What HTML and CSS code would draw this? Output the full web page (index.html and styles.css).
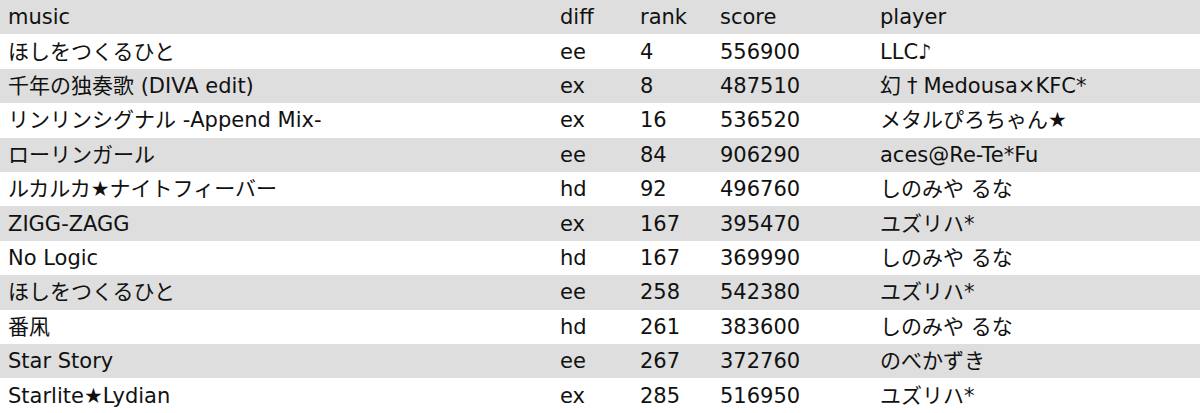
FILE: index.html
```html
<!DOCTYPE html>
<html lang="ja">
<head>
<meta charset="utf-8">
<link rel="stylesheet" href="styles.css">
</head>
<body>
<div class="table">
  <div class="row head"><span>music</span><span>diff</span><span>rank</span><span>score</span><span>player</span></div>
  <div class="row"><span>ほしをつくるひと</span><span>ee</span><span>4</span><span>556900</span><span>LLC♪</span></div>
  <div class="row alt"><span>千年の独奏歌 (DIVA edit)</span><span>ex</span><span>8</span><span>487510</span><span>幻<span class="wide">†</span>Medousa×KFC*</span></div>
  <div class="row"><span>リンリンシグナル -Append Mix-</span><span>ex</span><span>16</span><span>536520</span><span>メタルぴろちゃん★</span></div>
  <div class="row alt"><span>ローリンガール</span><span>ee</span><span>84</span><span>906290</span><span>aces@Re-Te*Fu</span></div>
  <div class="row"><span>ルカルカ★ナイトフィーバー</span><span>hd</span><span>92</span><span>496760</span><span>しのみや るな</span></div>
  <div class="row alt"><span>ZIGG-ZAGG</span><span>ex</span><span>167</span><span>395470</span><span>ユズリハ*</span></div>
  <div class="row"><span>No Logic</span><span>hd</span><span>167</span><span>369990</span><span>しのみや るな</span></div>
  <div class="row alt"><span>ほしをつくるひと</span><span>ee</span><span>258</span><span>542380</span><span>ユズリハ*</span></div>
  <div class="row"><span>番凩</span><span>hd</span><span>261</span><span>383600</span><span>しのみや るな</span></div>
  <div class="row alt"><span>Star Story</span><span>ee</span><span>267</span><span>372760</span><span>のべかずき</span></div>
  <div class="row"><span>Starlite★Lydian</span><span>ex</span><span>285</span><span>516950</span><span>ユズリハ*</span></div>
</div>
</body>
</html>
```

FILE: styles.css
```css
html, body {
  margin: 0;
  padding: 0;
  background: #ffffff;
}
.table {
  width: 1200px;
  font-family: "DejaVu Sans", "Noto Sans CJK JP", sans-serif;
  font-size: 21px;
  color: #111111;
}
.row {
  display: grid;
  grid-template-columns: 560px 80px 80px 160px 1fr;
  height: 34.42px;
  align-items: center;
  background: #ffffff;
}
.row.head, .row.alt {
  background: #dedede;
}
.row > span {
  white-space: nowrap;
  line-height: 1;
  padding-top: 1px;
}
.row > span:first-child {
  padding-left: 8px;
}
.wide {
  display: inline-block;
  padding: 0 6px;
}
```
